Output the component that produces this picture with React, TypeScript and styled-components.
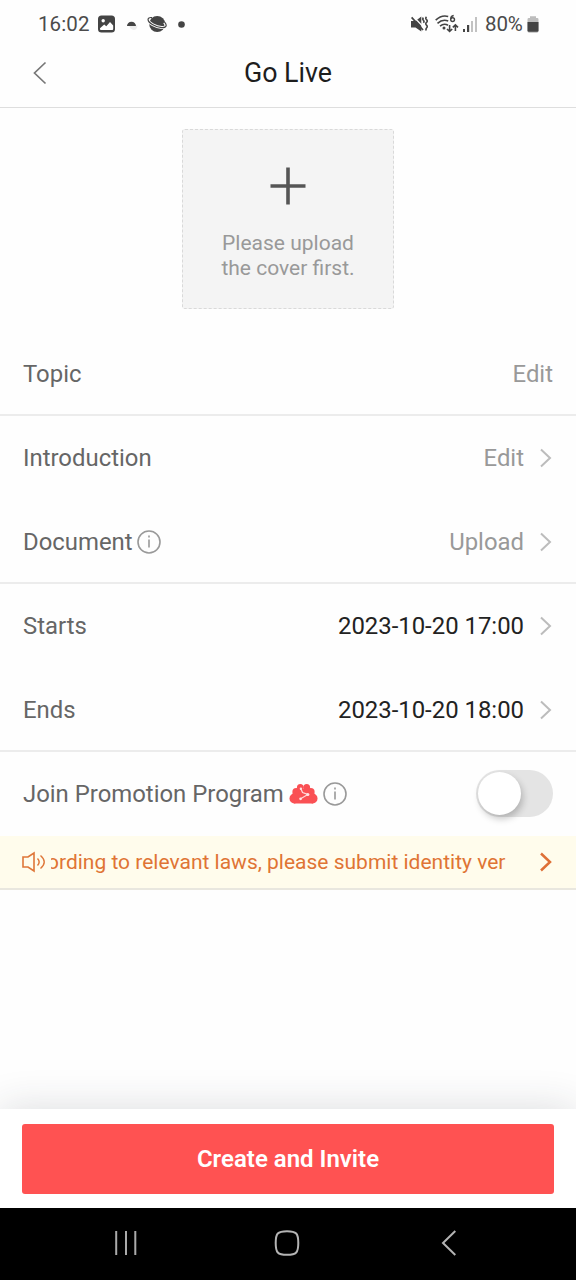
import React from "react";
import styled, { createGlobalStyle } from "styled-components";

const GlobalStyle = createGlobalStyle`
  * { box-sizing: border-box; }
  body { margin: 0; background: #fefefe; font-family: Roboto, "Liberation Sans", sans-serif; }
  svg { display: block; flex: none; }
`;

const Screen = styled.div`
  width: 576px;
  height: 1280px;
  display: flex;
  flex-direction: column;
  background: #fefefe;
  overflow: hidden;
`;

const StatusBar = styled.div`
  height: 48px;
  flex: none;
  display: flex;
  justify-content: space-between;
  padding: 0 37px 0 38px;
  font-size: 20.5px;
  color: #4b4b4b;
`;

const StatusGroup = styled.div`
  display: flex;
  align-items: center;
`;

const Clock = styled.span`
  width: 60px;
  letter-spacing: 0.1px;
`;

const Percent = styled.span`
  width: 42px;
  letter-spacing: -0.1px;
`;

const Header = styled.header`
  height: 60px;
  flex: none;
  display: grid;
  grid-template-columns: 60px 1fr 60px;
  align-items: center;
  padding-bottom: 10px;
  border-bottom: 1px solid #dedede;
`;

const BackButton = styled.button`
  border: 0;
  background: none;
  padding: 0 0 0 33px;
`;

const Title = styled.h1`
  margin: 0;
  text-align: center;
  font-size: 26.8px;
  line-height: 30px;
  font-weight: 400;
  color: #1d1d1d;
`;

const CoverArea = styled.div`
  height: 224px;
  flex: none;
  display: flex;
  justify-content: center;
  padding-top: 21px;
`;

const CoverUpload = styled.div`
  width: 212px;
  height: 180px;
  display: flex;
  flex-direction: column;
  align-items: center;
  padding-top: 37px;
  background: #f4f4f4;
  border: 1px dashed #d9d9d9;
  border-radius: 3px;
`;

const CoverText = styled.p`
  margin: 26px 0 0;
  text-align: center;
  font-size: 21px;
  line-height: 25px;
  color: #999;
`;

const Row = styled.div<{ $divided?: boolean }>`
  height: 84px;
  flex: none;
  display: flex;
  align-items: center;
  justify-content: space-between;
  padding: 1px 23px 0 23px;
  border-bottom: 2px solid ${(p) => (p.$divided ? "#ececec" : "transparent")};
`;

const Label = styled.div`
  display: flex;
  align-items: center;
  font-size: 23.9px;
  color: #666;
  white-space: nowrap;
`;

const Value = styled.div<{ $strong?: boolean }>`
  display: flex;
  align-items: center;
  gap: 15px;
  font-size: 23.9px;
  color: ${(p) => (p.$strong ? "#222" : "#999")};
`;

const Switch = styled.button`
  width: 77px;
  height: 47px;
  border: 0;
  border-radius: 24px;
  background: #e4e4e4;
  padding: 2px;
`;

const Knob = styled.span`
  display: block;
  width: 43px;
  height: 43px;
  border-radius: 50%;
  background: #fff;
  box-shadow: 2px 4px 7px rgba(0, 0, 0, 0.22);
`;

const Notice = styled.div`
  height: 54px;
  flex: none;
  display: flex;
  align-items: center;
  padding: 0 23px 0 22px;
  background: #fffcec;
  border-bottom: 2px solid #e9e7df;
`;

const Marquee = styled.div`
  width: 457px;
  margin-left: 5px;
  margin-right: auto;
  display: flex;
  overflow: hidden;
  white-space: nowrap;
  font-size: 21px;
  line-height: 30px;
  color: #e07434;
`;

const MarqueeText = styled.span`
  margin-left: -4px;
`;

const Spacer = styled.div`
  flex: 1;
`;

const Footer = styled.footer`
  height: 99px;
  flex: none;
  padding: 15px 22px 14px;
  background: #fff;
  box-shadow: 0 0 42px rgba(35, 45, 55, 0.16);
`;

const PrimaryButton = styled.button`
  width: 100%;
  height: 70px;
  border: 0;
  border-radius: 3px;
  background: #ff5252;
  color: #fff;
  font: 600 24px Roboto, "Liberation Sans", sans-serif;
`;

const SystemNav = styled.nav`
  height: 72px;
  flex: none;
  display: flex;
  align-items: center;
  padding: 0 0 2px 114px;
  background: #000;
`;

const NavItem = styled.span<{ $before?: number }>`
  margin-left: ${(p) => p.$before ?? 0}px;
`;

const Chevron = ({ color = "#bcbcbc", width = 2 }: { color?: string; width?: number }) => (
  <svg width="14" height="22" viewBox="0 0 14 22" fill="none" stroke={color} strokeWidth={width}>
    <path d="M2 2.5 11 11 2 19.5" />
  </svg>
);

const Info = ({ gap }: { gap: number }) => (
  <svg width="24" height="24" viewBox="0 0 24 24" fill="none" stroke="#999" strokeWidth="1.6" style={{ marginLeft: gap }}>
    <circle cx="12" cy="12" r="11" />
    <path d="M12 9.6v8M12 5.6v2" />
  </svg>
);

const PictureIcon = () => (
  <svg width="17" height="18" viewBox="0 0 17 18">
    <rect y="0.5" width="17" height="17" rx="3.5" fill="#444" />
    <circle cx="5.2" cy="5.8" r="1.7" fill="#fff" />
    <path d="M2 13.2 6.2 9.4 8.3 11.3 12 6.9 15.2 10.5V14.1Q15.2 15 14.3 15H2.9Q2 15 2 14.1Z" fill="#fff" />
  </svg>
);

const DomeIcon = () => (
  <svg width="11" height="12" viewBox="0 0 11 12">
    <path d="M2 7.5H10.5Q10 12 6.5 12 3 11 2 7.5" fill="#ececec" />
    <path d="M0 8A4.4 4.2 0 0 1 9 8Z" fill="#444" />
  </svg>
);

const PlanetIcon = () => (
  <svg width="20" height="18" viewBox="0 0 20 18" fill="none">
    <circle cx="10.2" cy="9" r="8" fill="#444" />
    <path d="M4.2 2.6C-.6 2.2 0 6.6 5.8 9.8S19 13.8 19 10.2Q18.8 8.8 17.4 7.2" stroke="#fefefe" strokeWidth="3" />
    <path d="M5 2.6C-.6 1.8-.2 6.4 5.8 9.8S19.2 13.8 19.2 10.2Q19 8.4 17.4 7" stroke="#444" strokeWidth="1.2" />
  </svg>
);

const MuteIcon = () => (
  <svg width="17" height="18" viewBox="0 0 17 18" fill="none" stroke="#444">
    <path d="M0 6H4.5L10.3 1.5V16.5L4.5 12.5H0Z" fill="#444" stroke="none" />
    <path d="M2.8 2 11.5 11" stroke="#fefefe" strokeWidth="1.3" />
    <path d="M.6 2.4 12 15" strokeWidth="1.8" />
    <path d="M12.4 2.6q-1.2 1.3 0 2.6t0 2.6M15.5 1.8q-1.5 1.4 0 2.8t0 2.8q-1.5 1.4 0 2.8t0 2.8q-1.2 1.3 0 2.4" strokeWidth="1.6" />
  </svg>
);

const WifiIcon = () => (
  <svg width="24" height="20" viewBox="0 0 24 20" fill="none" stroke="#444" strokeWidth="1.6">
    <path d="M.7 6.1Q6.5 .7 13.2 2.5M2.5 9.3Q7.5 4.8 13.2 7M5 12.1Q9 8.9 13 11.3" />
    <circle cx="9" cy="14" r="1.5" fill="#444" stroke="none" />
    <path d="M18.7 1.6Q15.8 2 15.8 5" strokeWidth="1.5" />
    <circle cx="17.6" cy="5.6" r="1.9" strokeWidth="1.4" />
    <path d="M14.6 11v6.3M12 15l2.6 2.5 2.6-2.5M20.4 17v-6M17.8 13.3l2.6-2.5 2.6 2.5" strokeWidth="1.6" />
  </svg>
);

const SignalIcon = () => (
  <svg width="16" height="17" viewBox="0 0 16 17">
    <path d="M1 13h2v3H1zM5 9h2.2v7H5z" fill="#444" />
    <path d="M9 5h2v11H9zM13 1h2v15h-2z" fill="#c2c2c2" />
  </svg>
);

const BatteryIcon = () => (
  <svg width="12" height="17" viewBox="0 0 12 17">
    <path d="M3 .3h6V2H10.2Q11.5 2 11.5 3.4V15Q11.5 16.7 9.8 16.7H2.2Q.5 16.7 .5 15V3.4Q.5 2 1.8 2H3Z" fill="#bdbdbd" />
    <path d="M.5 6h11v8.4q0 1.3-1.3 1.3H1.8Q.5 15.7 .5 14.4Z" fill="#444" />
  </svg>
);

const PromotionIcon = () => (
  <svg width="29" height="22" viewBox="0 0 30 22" preserveAspectRatio="none" style={{ marginLeft: 5 }}>
    <g fill="#fa5054">
      <circle cx="5.5" cy="15.5" r="5" />
      <circle cx="24.5" cy="15.5" r="5" />
      <circle cx="7.5" cy="9" r="4" />
      <circle cx="22.5" cy="9" r="4" />
      <circle cx="11.7" cy="4.5" r="3.5" />
      <circle cx="18.3" cy="4.5" r="3.5" />
      <path d="M8 6h14l3 14.5H5z" />
    </g>
    <path d="M12.3 5.8 14 9.5 19.5 11.5 12 15.8" fill="none" stroke="#ffd8d7" strokeWidth="1.3" />
    <g fill="#ffe5e4">
      <circle cx="12.3" cy="5.8" r="1.2" />
      <circle cx="19.5" cy="11.5" r="1.6" />
      <circle cx="12" cy="15.8" r="1.4" />
    </g>
  </svg>
);

export default function App() {
  return (
    <Screen>
      <GlobalStyle />
      <StatusBar>
        <StatusGroup>
          <Clock>16:02</Clock>
          <PictureIcon />
          <svg width="12" height="1" />
          <DomeIcon />
          <svg width="9" height="1" />
          <PlanetIcon />
          <svg width="18" height="7" viewBox="0 0 18 7"><circle cx="14.5" cy="3.5" r="3.3" fill="#444" /></svg>
        </StatusGroup>
        <StatusGroup>
          <MuteIcon />
          <svg width="7" height="1" />
          <WifiIcon />
          <svg width="3" height="1" />
          <SignalIcon />
          <svg width="7" height="1" />
          <Percent>80%</Percent>
          <BatteryIcon />
        </StatusGroup>
      </StatusBar>

      <Header>
        <BackButton aria-label="Back">
          <svg width="14" height="24" viewBox="0 0 14 24" fill="none" stroke="#777" strokeWidth="1.7">
            <path d="M12.5 1.5 1.5 12 12.5 22.5" />
          </svg>
        </BackButton>
        <Title>Go Live</Title>
      </Header>

      <CoverArea>
        <CoverUpload>
          <svg width="36" height="38" viewBox="0 0 36 38" stroke="#555" strokeWidth="3.6">
            <path d="M18 .5v37M.5 19h35" />
          </svg>
          <CoverText>Please upload<br />the cover first.</CoverText>
        </CoverUpload>
      </CoverArea>

      <Row $divided>
        <Label>Topic</Label>
        <Value>Edit</Value>
      </Row>
      <Row>
        <Label>Introduction</Label>
        <Value>Edit<Chevron /></Value>
      </Row>
      <Row $divided>
        <Label>Document<Info gap={4.5} /></Label>
        <Value>Upload<Chevron /></Value>
      </Row>
      <Row>
        <Label>Starts</Label>
        <Value $strong>2023-10-20 17:00<Chevron /></Value>
      </Row>
      <Row $divided>
        <Label>Ends</Label>
        <Value $strong>2023-10-20 18:00<Chevron /></Value>
      </Row>
      <Row>
        <Label>Join Promotion Program<PromotionIcon /><Info gap={5.5} /></Label>
        <Switch role="switch" aria-checked="false" aria-label="Join Promotion Program"><Knob /></Switch>
      </Row>

      <Notice>
        <svg width="24" height="22" viewBox="0 0 24 22" fill="none" stroke="#df7638" strokeWidth="1.6">
          <path d="M1 6H6L12 2V20L6 16H1Z" />
          <path d="M15.5 7.5Q18.8 11 15.5 14.5M18.5 4.5Q26 11 18.5 17.5" strokeWidth="1.4" />
        </svg>
        <Marquee><MarqueeText>ording to relevant laws, please submit identity ver</MarqueeText></Marquee>
        <Chevron color="#de7037" width={2.5} />
      </Notice>

      <Spacer />
      <Footer>
        <PrimaryButton>Create and Invite</PrimaryButton>
      </Footer>
      <SystemNav>
        <NavItem>
          <svg width="24" height="26" viewBox="0 0 24 26" stroke="#aaa" strokeWidth="2">
            <path d="M2.2 1v24M12 1v24M21.3 1v24" />
          </svg>
        </NavItem>
        <NavItem $before={136}>
          <svg width="26" height="26" viewBox="0 0 26 26" fill="none" stroke="#b4b4b4" strokeWidth="2">
            <path d="M13 1.2C22.5 1.2 24.3 3.5 24.3 13S22.5 24.8 13 24.8 1.7 22.5 1.7 13 3.5 1.2 13 1.2Z" />
          </svg>
        </NavItem>
        <NavItem $before={141}>
          <svg width="16" height="26" viewBox="0 0 16 26" fill="none" stroke="#b4b4b4" strokeWidth="2">
            <path d="M14.3 1 2 13 14.3 25" />
          </svg>
        </NavItem>
      </SystemNav>
    </Screen>
  );
}
